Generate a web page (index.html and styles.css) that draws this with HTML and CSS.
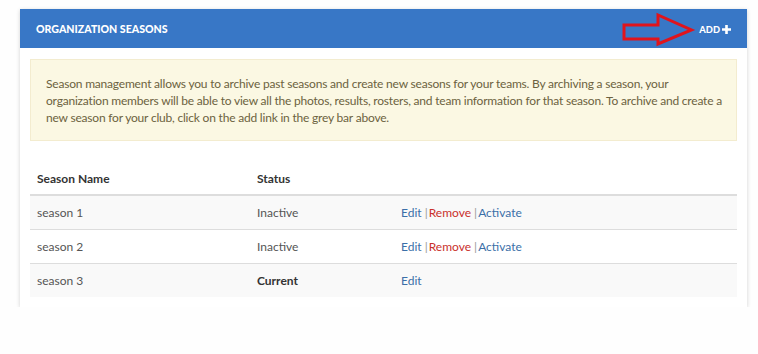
FILE: index.html
```html
<!DOCTYPE html>
<html>
<head>
<meta charset="utf-8">
<link rel="stylesheet" href="styles.css">
</head>
<body>
<div class="card">
  <div class="card-head">
    <span class="title">ORGANIZATION SEASONS</span>
    <a class="add">ADD<svg class="plus" width="9" height="9" viewBox="0 0 9 9"><path d="M3.2 0h2.6v3.2H9v2.6H5.8V9H3.2V5.8H0V3.2h3.2z" fill="#fff"/></svg></a>
    <svg class="arrow" width="76" height="40" viewBox="0 0 76 40"><path d="M4 15 H38 V5 L71.5 20 L38 34 V29 H4 Z" fill="none" stroke="#e0141c" stroke-width="3" stroke-linejoin="miter"/></svg>
  </div>
  <div class="card-body">
    <div class="notice">Season management allows you to archive past seasons and create new seasons for your teams. By archiving a season, your<br>organization members will be able to view all the photos, results, rosters, and team information for that season. To archive and create a<br>new season for your club, click on the add link in the grey bar above.</div>
    <table class="seasons">
      <thead>
        <tr><th class="c1">Season Name</th><th class="c2">Status</th><th></th></tr>
      </thead>
      <tbody>
        <tr class="odd"><td>season 1</td><td>Inactive</td><td><a class="lk">Edit</a> <span class="sep">|</span><a class="rm">Remove</a> <span class="sep">|</span><a class="lk">Activate</a></td></tr>
        <tr><td>season 2</td><td>Inactive</td><td><a class="lk">Edit</a> <span class="sep">|</span><a class="rm">Remove</a> <span class="sep">|</span><a class="lk">Activate</a></td></tr>
        <tr class="odd"><td>season 3</td><td class="cur">Current</td><td><a class="lk">Edit</a></td></tr>
      </tbody>
    </table>
  </div>
</div>
</body>
</html>
```
FILE: styles.css
```css
html, body { margin: 0; padding: 0; background: #fefefe; }
body {
  font-family: "Source Sans Pro", Lato, "Liberation Sans", sans-serif;
  font-size: 12px;
  color: #333;
  padding: 9px 11px 0 20px;
}
.card {
  width: 727px;
  background: #fff;
  box-shadow: 0 1px 4px rgba(0,0,0,0.18);
  padding-bottom: 10px;
}
.card-head {
  position: relative;
  height: 39px;
  background: #3877c6;
  display: flex;
  align-items: center;
  justify-content: space-between;
  padding: 0 16px 0 16px;
}
.title {
  color: #fff;
  font-weight: 900;
  font-size: 10.6px;
}
.add {
  color: #fff;
  font-weight: 900;
  font-size: 9.3px;
  display: flex;
  align-items: center;
  gap: 2px;
  margin-top: 1px;
}
.arrow {
  position: absolute;
  left: 600px;
  top: 1px;
}
.card-body {
  padding: 11px 10px 0 10px;
}
.notice {
  background: #fbf8e3;
  border: 1px solid #f3eccf;
  color: #6c6240;
  font-size: 12px;
  letter-spacing: -0.2px;
  line-height: 17px;
  white-space: nowrap;
  overflow: hidden;
  padding: 15px 15px 14px 15px;
}
.seasons {
  width: 100%;
  border-collapse: collapse;
  margin-top: 28px;
  font-size: 12px;
}
.seasons th {
  text-align: left;
  font-weight: 700;
  color: #333;
  padding: 2px 7px 8px 7px;
  border-bottom: 2px solid #ddd;
  height: 13px;
}
.seasons td {
  height: 33px;
  padding: 0 7px;
  border-bottom: 1px solid #ddd;
  color: #555;
}
.seasons tbody tr:last-child td { border-bottom: none; }
.seasons .c1 { width: 206px; }
.seasons .c2 { width: 130px; }
.odd td { background: #f9f9f9; }
.cur { font-weight: 700; color: #333 !important; }
.lk { color: #3b6fa8; }
.rm { color: #c9302c; }
.sep { color: #999; margin-right: 1px; }
```
